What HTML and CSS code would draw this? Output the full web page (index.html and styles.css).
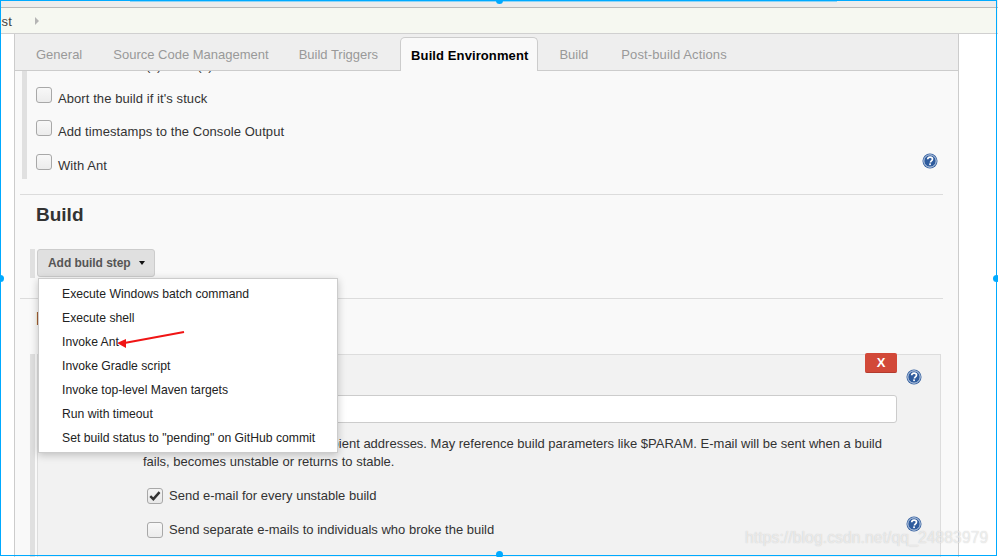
FILE: index.html
```html
<!DOCTYPE html>
<html lang="en">
<head>
<meta charset="utf-8">
<title>Build Environment</title>
<link rel="stylesheet" href="styles.css">
</head>
<body>
<svg class="defs" width="0" height="0" aria-hidden="true">
  <symbol id="help" viewBox="0 0 16 16">
    <circle cx="8" cy="8" r="7.5" fill="#2f5c9e"/>
    <circle cx="8" cy="8" r="6.2" fill="none" stroke="#dfe7f2" stroke-width="0.9"/>
    <path d="M5.7 6.3C5.8 4.9 6.8 4.1 8.1 4.1c1.4 0 2.4.8 2.4 2 0 1-.6 1.5-1.3 2-.5.4-.7.7-.7 1.3" fill="none" stroke="#fff" stroke-width="1.7"/>
    <rect x="7.2" y="10.4" width="1.7" height="1.7" fill="#fff"/>
  </symbol>
</svg>
<div class="page">
  <div class="strip"><div class="strip-hi"></div></div>
  <div class="crumbs"><span class="crumb">Test</span><span class="crumb-arrow"></span></div>
  <div class="form">
    <div class="tabs">
      <span class="tab tab-general">General</span>
      <span class="tab tab-scm">Source Code Management</span>
      <span class="tab tab-trig">Build Triggers</span>
      <span class="tab tab-active">Build Environment</span>
      <span class="tab tab-build">Build</span>
      <span class="tab tab-post">Post-build Actions</span>
    </div>
    <div class="env">
      <div class="clipped"><span>Use secret text(s) or file(s)</span></div>
      <label class="row row-abort"><span class="box"></span><span>Abort the build if it's stuck</span></label>
      <label class="row"><span class="box"></span><span>Add timestamps to the Console Output</span></label>
      <div class="row row-ant">
        <label class="row-label"><span class="box"></span><span>With Ant</span></label>
        <svg class="help help-ant"><use href="#help"/></svg>
      </div>
    </div>
    <hr class="rule rule-env">
    <h2 class="heading heading-build">Build</h2>
    <div class="addbar">
      <button class="addbtn" type="button">Add build step<span class="caret"></span></button>
    </div>
    <hr class="rule rule-build">
    <h2 class="heading heading-post">Post-build Actions</h2>
    <div class="panelwrap">
      <div class="panel">
        <div class="panel-head">
          <button class="del" type="button">X</button>
          <svg class="help help-del"><use href="#help"/></svg>
        </div>
        <div class="field">
          <input class="field-input" type="text">
        </div>
        <p class="desc">Whitespace-separated list of recipient addresses. May reference build parameters like $PARAM. E-mail will be sent when a build fails, becomes unstable or returns to stable.</p>
        <label class="opt opt-first"><span class="box box-on"><svg viewBox="0 0 16 16" width="14" height="14"><path d="M2.6 8.2 6.1 11.6 13.2 3.6" fill="none" stroke="#333" stroke-width="2.8"/></svg></span><span>Send e-mail for every unstable build</span></label>
        <div class="opt opt-second">
          <label class="row-label"><span class="box"></span><span>Send separate e-mails to individuals who broke the build</span></label>
          <svg class="help help-opt"><use href="#help"/></svg>
        </div>
      </div>
    </div>
  </div>

  <ul class="menu">
    <li>Execute Windows batch command</li>
    <li>Execute shell</li>
    <li>Invoke Ant</li>
    <li>Invoke Gradle script</li>
    <li>Invoke top-level Maven targets</li>
    <li>Run with timeout</li>
    <li>Set build status to "pending" on GitHub commit</li>
  </ul>
  <svg class="arrow" width="80" height="24" viewBox="0 0 80 24">
    <path d="M71 2 10 13.2" fill="none" stroke="#f01414" stroke-width="2"/>
    <path d="M4 13 13 9 13 18Z" fill="#f01414"/>
  </svg>
  <div class="watermark">https://blog.csdn.net/qq_24883979</div>
  <div class="frame">
    <i class="dot dot-top"></i><i class="dot dot-left"></i><i class="dot dot-right"></i><i class="dot dot-bottom"></i>
  </div>
</div>
</body>
</html>
```
FILE: styles.css
```css
* { box-sizing: border-box; }
html, body { margin: 0; padding: 0; background: #fff; }
body {
  font-family: "Liberation Sans", Arial, sans-serif;
  font-size: 13px;
  color: #333;
}
.defs { position: absolute; }
.page { position: relative; width: 998px; height: 557px; overflow: hidden; background: #fff; }

.strip { height: 8px; background: #ececec; border-bottom: 1px solid #b9b9b9; padding-left: 130px; }
.strip-hi { width: 707px; height: 2px; background: #8fd4f5; }

.crumbs {
  height: 26px;
  display: flex;
  align-items: center;
  background: #f6f8f1;
  border-bottom: 1px solid #d0d0d0;
  color: #444;
  margin-left: -13px;
}
.crumb { width: 48px; letter-spacing: .35px; padding-top: 1px; }
.crumb-arrow { width: 0; height: 0; border-left: 4px solid #b5b5b5; border-top: 4px solid transparent; border-bottom: 4px solid transparent; }

.form {
  margin-left: 14px;
  width: 945px;
  height: 523px;
  background: #f9f9f9;
  border-left: 1px solid #ccc;
  border-right: 1px solid #ccc;
  overflow: hidden;
}

.tabs {
  height: 37px;
  display: flex;
  background: #eee;
  border-bottom: 1px solid #ccc;
  padding-left: 21px;
  color: #999;
}
.tab { padding-top: 13px; white-space: nowrap; }
.tab-general { margin-right: 31px; }
.tab-scm { margin-right: 30px; }
.tab-trig { margin-right: 22px; }
.tab-active {
  height: 34px;
  margin-top: 3px;
  padding: 10px 9px 0 10px;
  background: #f9f9f9;
  border: 1px solid #ccc;
  border-bottom: 0;
  border-radius: 5px 5px 0 0;
  color: #000;
  font-weight: 700;
  letter-spacing: .1px;
  margin-right: 21px;
}
.tab-build { margin-right: 33px; }
.tab-post { letter-spacing: .12px; }

.env {
  margin-left: 7px;
  height: 108px;
  border-left: 5px solid #e0e0e0;
  padding-left: 9px;
  letter-spacing: .08px;
}
.clipped { height: 2px; overflow: hidden; position: relative; }
.clipped span { position: absolute; left: 22px; bottom: 0; line-height: 15px; white-space: nowrap; }
.row { display: flex; align-items: center; height: 33px; }
.row-abort { margin-top: 6px; }
.row-ant { justify-content: space-between; padding-right: 20px; margin-top: 1px; }
.row-label { display: flex; align-items: center; }
.row > span:last-child, .row-label > span:last-child { margin-left: 6px; padding-top: 6px; }
.opt > span:last-child, .opt .row-label > span:last-child { margin-left: 6px; padding: 0 0 2px; }
.opt-second .row-label > span:last-child { padding-bottom: 3px; }
.box {
  flex: none;
  width: 16px;
  height: 16px;
  margin-top: -1px;
  border: 1px solid #a8a8a8;
  border-radius: 3px;
  background: linear-gradient(#f8f8f8, #ececec);
  display: flex;
  align-items: center;
  justify-content: center;
}
.help { width: 16px; height: 16px; flex: none; }
.help-ant { margin-top: -4px; }

.rule { height: 1px; border: 0; background: #dcdcdc; margin: 0 15px 0 5px; }
.rule-env { margin-top: 15px; }
.heading { margin: 0 0 0 21px; font-size: 19px; line-height: 24px; color: #333; font-weight: 700; }
.heading-build { padding-top: 8px; height: 54px; }
.addbar { margin-left: 15px; height: 29px; border-left: 5px solid #e0e0e0; padding-left: 2px; }
.addbtn {
  display: flex;
  align-items: center;
  width: 118px;
  height: 28px;
  padding: 0 0 1px 10px;
  font: 700 12px "Liberation Sans", Arial, sans-serif;
  letter-spacing: -.05px;
  white-space: nowrap;
  color: #555;
  background: #e0e0e0;
  border: 1px solid #ccc;
  border-radius: 3px;
}
.caret { width: 0; height: 0; margin-left: 8px; border-top: 4px solid #111; border-left: 3.5px solid transparent; border-right: 3.5px solid transparent; }
.rule-build { margin-top: 20px; }
.heading-post { padding-top: 8px; height: 55px; }

.panelwrap { margin-left: 15px; border-left: 5px solid #e0e0e0; padding-left: 2px; height: 220px; margin-right: 17px; }
.panel {
  height: 220px;
  background: #f2f2f2;
  border: 1px solid #ddd;
  padding: 0 18px 0 105px;
}
.panel-head { display: flex; justify-content: flex-end; align-items: flex-start; height: 40px; }
.del {
  width: 32px;
  height: 20px;
  margin-top: -2px;
  padding: 0;
  border: 0;
  border-bottom: 1px solid #b33b2e;
  border-radius: 2px;
  background: #d24939;
  color: #fff;
  font: 700 13px "Liberation Sans", Arial, sans-serif;
}
.help-del { margin: 14px 0 0 9px; }
.field { margin-right: 25px; }
.field-input { display: block; width: 100%; height: 28px; background: #fff; border: 1px solid #ccc; border-radius: 3px; }
.desc { margin: 12px 25px 0 0; line-height: 18px; color: #333; }
.opt { display: flex; align-items: center; height: 33px; margin-left: 4px; }
.opt-first { margin-top: 9px; }
.opt-second { justify-content: space-between; margin-top: 1px; }
.help-opt { margin-top: -14px; }
.box-on { background: linear-gradient(#f4f4f4, #e8e8e8); }

.menu {
  position: absolute;
  left: 38px;
  top: 278px;
  width: 300px;
  height: 175px;
  margin: 0;
  padding: 4px 0 0;
  list-style: none;
  background: #fff;
  border: 1px solid #ccc;
  box-shadow: 0 2px 8px rgba(0,0,0,.22);
  color: #222;
  font-size: 12.2px;
}
.menu li { height: 24px; line-height: 23px; padding-left: 23px; white-space: nowrap; }

.arrow { position: absolute; left: 113px; top: 330px; }

.watermark {
  position: absolute;
  left: 745px;
  top: 528px;
  font-size: 15.65px;
  line-height: 20px;
  white-space: nowrap;
  letter-spacing: .1px;
  color: rgba(255,255,255,.6);
  text-shadow: 0 0 1px rgba(120,120,120,.4);
}

.frame {
  position: absolute;
  inset: 0 1px 1px 0;
  border: 1.5px solid #00aaff;
  pointer-events: none;
}
.dot { position: absolute; width: 7px; height: 7px; border-radius: 50%; background: #00aaff; }
.dot-top { left: 495px; top: -4px; }
.dot-bottom { left: 495px; bottom: -3px; }
.dot-left { left: -4px; top: 274px; }
.dot-right { right: -4px; top: 274px; }
```
